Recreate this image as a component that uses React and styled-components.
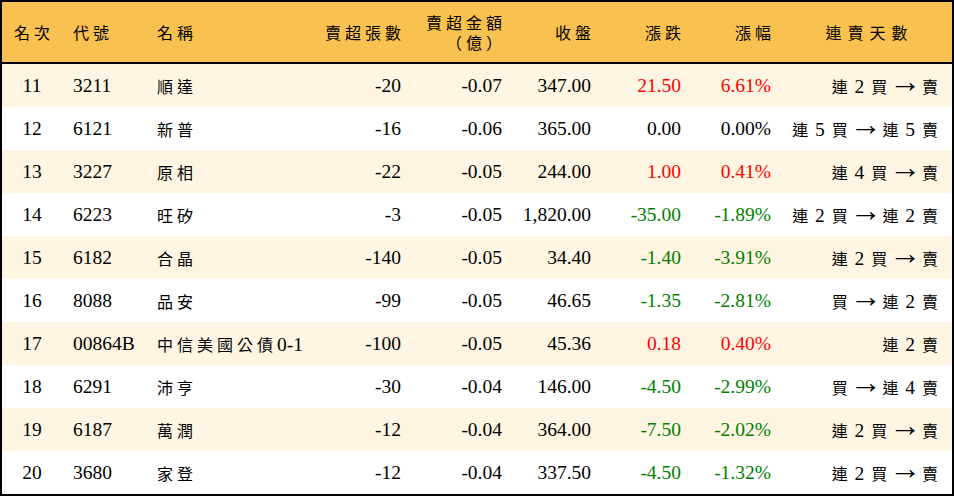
import React from 'react'
import styled, { createGlobalStyle } from 'styled-components'

const GlobalStyle = createGlobalStyle`
    html, body {
        margin: 0;
        padding: 0;
        background: #FFFFFF;
    }
    * {
        box-sizing: border-box;
    }
`;

const COLS = '60px 85px 173px 91px 101px 89px 90px 90px 171px';

const rows = [
    { rank: 11, code: '3211', name: '順達', lots: '-20', amount: '-0.07', close: '347.00', chg: '21.50', pct: '6.61%', streak: '連 2 買 → 賣' },
    { rank: 12, code: '6121', name: '新普', lots: '-16', amount: '-0.06', close: '365.00', chg: '0.00', pct: '0.00%', streak: '連 5 買 → 連 5 賣' },
    { rank: 13, code: '3227', name: '原相', lots: '-22', amount: '-0.05', close: '244.00', chg: '1.00', pct: '0.41%', streak: '連 4 買 → 賣' },
    { rank: 14, code: '6223', name: '旺矽', lots: '-3', amount: '-0.05', close: '1,820.00', chg: '-35.00', pct: '-1.89%', streak: '連 2 買 → 連 2 賣' },
    { rank: 15, code: '6182', name: '合晶', lots: '-140', amount: '-0.05', close: '34.40', chg: '-1.40', pct: '-3.91%', streak: '連 2 買 → 賣' },
    { rank: 16, code: '8088', name: '品安', lots: '-99', amount: '-0.05', close: '46.65', chg: '-1.35', pct: '-2.81%', streak: '買 → 連 2 賣' },
    { rank: 17, code: '00864B', name: '中信美國公債0-1', lots: '-100', amount: '-0.05', close: '45.36', chg: '0.18', pct: '0.40%', streak: '連 2 賣' },
    { rank: 18, code: '6291', name: '沛亨', lots: '-30', amount: '-0.04', close: '146.00', chg: '-4.50', pct: '-2.99%', streak: '買 → 連 4 賣' },
    { rank: 19, code: '6187', name: '萬潤', lots: '-12', amount: '-0.04', close: '364.00', chg: '-7.50', pct: '-2.02%', streak: '連 2 買 → 賣' },
    { rank: 20, code: '3680', name: '家登', lots: '-12', amount: '-0.04', close: '337.50', chg: '-4.50', pct: '-1.32%', streak: '連 2 買 → 賣' },
];

function tone(v){
    if (v.startsWith('-')) return 'down'
    if (parseFloat(v) === 0) return 'flat'
    return 'up'
}

const HAN = /[\u3000-\u9fff\uff00-\uffef]/

// wraps the chinese runs (and the arrow) so they get the CJK font and their own spacing
function Mixed({ text, ls }){
    const parts = text.split(/([\u3000-\u9fff\uff00-\uffef]+|→)/)
    return (
        <Line>
            {parts.map((p, i) => {
                if (p === '→') return <Arrow key={i}>{p}</Arrow>
                if (HAN.test(p)) return <Han key={i} $ls={ls}>{p}</Han>
                return <React.Fragment key={i}>{p}</React.Fragment>
            })}
        </Line>
    )
}

export default function App(){
    return(
        <>
            <GlobalStyle />
            <Table>
                <Head>
                    <HeadCell $align="center"><HeadText>名次</HeadText></HeadCell>
                    <HeadCell $align="left" $pl={11}><HeadText>代號</HeadText></HeadCell>
                    <HeadCell $align="left" $pl={10}><HeadText>名稱</HeadText></HeadCell>
                    <HeadCell $align="right"><HeadText>賣超張數</HeadText></HeadCell>
                    <HeadCell $align="right">
                        <HeadStack>
                            <HeadLine>賣超金額</HeadLine>
                            <HeadLine>（億）</HeadLine>
                        </HeadStack>
                    </HeadCell>
                    <HeadCell $align="right"><HeadText>收盤</HeadText></HeadCell>
                    <HeadCell $align="right"><HeadText>漲跌</HeadText></HeadCell>
                    <HeadCell $align="right"><HeadText>漲幅</HeadText></HeadCell>
                    <HeadCell $align="center"><HeadText $ls={6}>連賣天數</HeadText></HeadCell>
                </Head>
                {rows.map((r, i) => (
                    <Row key={r.rank} $tinted={i % 2 === 0}>
                        <Cell $align="center">{r.rank}</Cell>
                        <Cell $align="left" $pl={11}>{r.code}</Cell>
                        <Cell $align="left" $pl={10}><Mixed text={r.name} ls={4} /></Cell>
                        <Cell $align="right">{r.lots}</Cell>
                        <Cell $align="right">{r.amount}</Cell>
                        <Cell $align="right">{r.close}</Cell>
                        <Cell $align="right" $tone={tone(r.chg)}>{r.chg}</Cell>
                        <Cell $align="right" $tone={tone(r.pct)}>{r.pct}</Cell>
                        <StreakCell><Mixed text={r.streak} /></StreakCell>
                    </Row>
                ))}
            </Table>
        </>
    )
}

const Table = styled.div`
    width: 954px;
    height: 496px;
    border: 2px solid #000000;
    display: flex;
    flex-direction: column;
    font-family: "Liberation Serif", "Noto Sans CJK TC", serif;
    font-size: 19.5px;
    color: #000000;
`;

const Head = styled.div`
    display: grid;
    grid-template-columns: ${COLS};
    height: 62px;
    background: #F9C14F;
    border-bottom: 2px solid #000000;
`;

const justify = { left: 'flex-start', right: 'flex-end', center: 'center' };

const HeadCell = styled.div`
    display: flex;
    align-items: center;
    justify-content: ${p => justify[p.$align]};
    padding-left: ${p => p.$pl || 0}px;
    padding-right: ${p => p.$align === 'right' ? 10 : 0}px;
`;

const HeadStack = styled.div`
    display: flex;
    flex-direction: column;
    align-items: flex-end;
    gap: 2px;
`;

const HeadText = styled.span`
    font-family: "Noto Sans CJK TC", sans-serif;
    font-size: 16px;
    letter-spacing: ${p => p.$ls || 4}px;
    margin-right: -${p => p.$ls || 4}px;
    white-space: nowrap;
`;

const HeadLine = styled(HeadText)`
    display: block;
    height: 18px;
    line-height: 18px;
`;

const Row = styled.div`
    display: grid;
    grid-template-columns: ${COLS};
    height: 43px;
    background: ${p => p.$tinted ? '#FEF5E3' : '#FFFFFF'};
`;

const toneColor = { up: '#FF0000', down: '#008000', flat: '#000000' };

const Cell = styled.div`
    display: flex;
    align-items: center;
    justify-content: ${p => justify[p.$align]};
    padding-left: ${p => p.$pl || 0}px;
    padding-right: ${p => p.$align === 'right' ? 10 : 0}px;
    color: ${p => toneColor[p.$tone] || '#000000'};
    white-space: nowrap;
`;

const StreakCell = styled.div`
    display: flex;
    align-items: center;
    justify-content: flex-end;
    padding-right: 13px;
    letter-spacing: 1px;
    white-space: pre;
`;

const Line = styled.span`
    white-space: inherit;
`;

const Han = styled.span`
    font-family: "Noto Sans CJK TC", sans-serif;
    font-size: 16px;
    ${p => p.$ls !== undefined ? `letter-spacing: ${p.$ls}px;` : ''}
`;

const Arrow = styled.span`
    font-family: "Liberation Serif", serif;
    font-size: 32px;
    line-height: 0;
    letter-spacing: 0;
    vertical-align: 1px;
    margin: 0 -5px;
`;
